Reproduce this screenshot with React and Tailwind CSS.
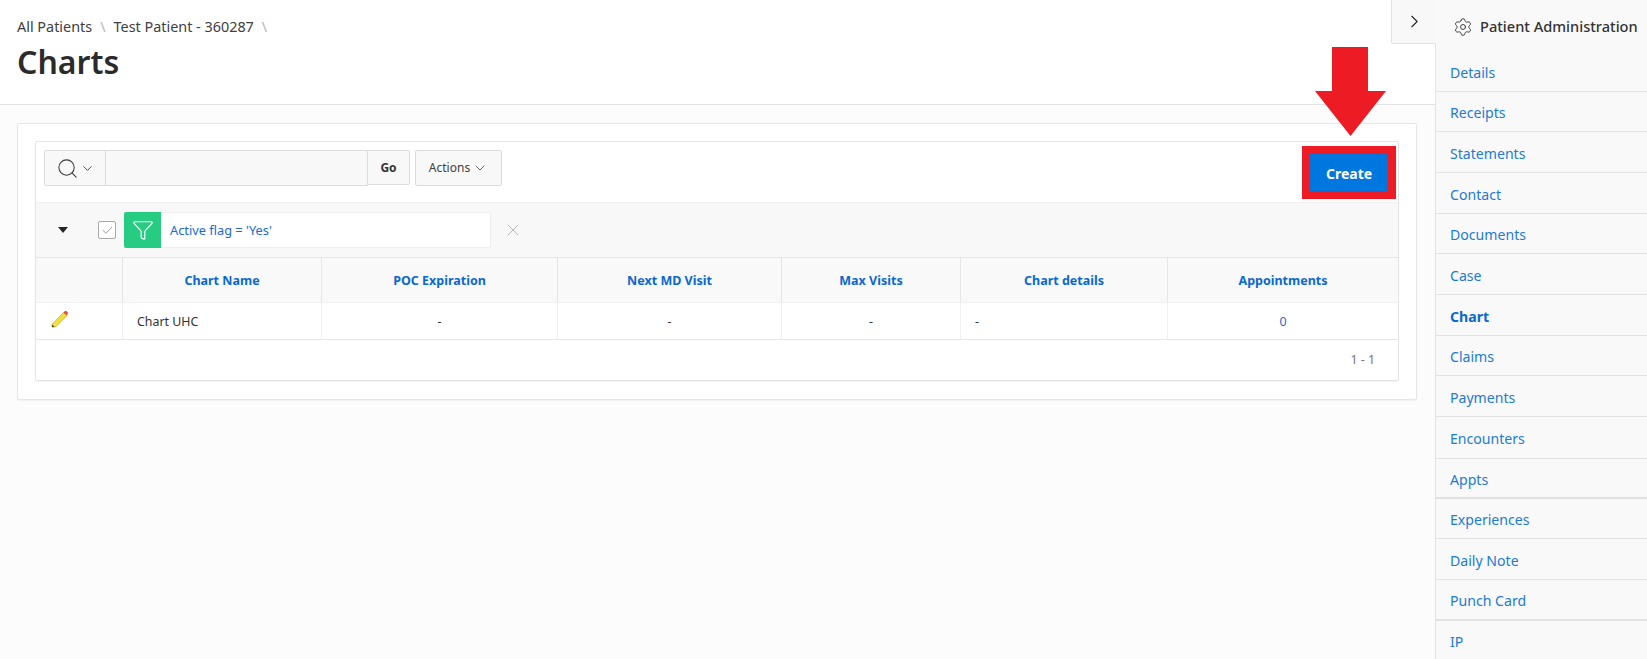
import React from "react";
import { ChevronDown, ChevronRight, Search, Settings, X, Check, Funnel } from "lucide-react";

const navTop = [
  ["Details", 41, 1], ["Receipts", 40, 1], ["Statements", 41, 1], ["Contact", 41, 1], ["Documents", 40, 1], ["Case", 41, 1],
  ["Chart", 41, 1], ["Claims", 40, 1], ["Payments", 41, 1], ["Encounters", 42, 1], ["Appts", 40, 2], ["Experiences", 40, 1], ["Daily Note", 41, 1], ["Punch Card", 41, 2], ["IP", 38, 0],
];
const cols = [
  ["", ""],
  ["Chart Name", "Chart UHC"],
  ["POC Expiration", "-"],
  ["Next MD Visit", "-"],
  ["Max Visits", "-"],
  ["Chart details", "-"],
  ["Appointments", "0"],
];
const grid = "grid grid-cols-[87px_199px_236px_224px_179px_207px_1fr]";

function Pencil() {
  return (
    <svg width="18" height="18" viewBox="0 0 18 18">
      <path d="M1 14.5 L12.5 2.5 L16 5.5 L4.5 17 L1 17 Z" fill="#f2e23c" stroke="#b5a52a" strokeWidth="0.7" />
      <path d="M12.5 2.5 L14 1 Q15.5 0.5 16.6 2 Q17.3 3.2 16 5.5 Z" fill="#ec4b2c" />
      <path d="M1 14.6 L3.6 17 L1 17 Z" fill="#3a3a2a" />
    </svg>
  );
}

export default function App() {
  return (
    <div className="relative flex h-[659px] w-[1647px] overflow-hidden bg-[#fcfcfc] font-['Noto_Sans','Open_Sans',sans-serif] text-[#262626]">
      <main className="w-[1435px] shrink-0">
        <header className="h-[105px] border-b border-[#e2e2e2] bg-white pl-[17px] pt-4">
          <div className="flex h-[22px] items-center text-[14.4px] text-[#404040]">
            <span>All Patients</span>
            <span className="mx-[8px] text-[#b5b5b5]">\</span>
            <span>Test Patient - 360287</span>
            <span className="mx-[8px] text-[#b5b5b5]">\</span>
          </div>
          <h1 className="mt-[2px] text-[32px] font-semibold leading-[44px] text-[#2b2b2b]">Charts</h1>
        </header>

        <section className="ml-[17px] mt-[18px] h-[277px] w-[1400px] rounded-[2px] border border-[#e6e6e6] bg-white pl-[17px] pt-[17px] shadow-[0_1px_2px_rgba(0,0,0,0.05)]">
          <div className="h-[240px] w-[1364px] rounded-[2px] border border-[#e4e4e4] bg-white shadow-[0_1px_1px_rgba(0,0,0,0.04)]">
            <div className="flex h-[60px] items-start pl-2 pt-2">
              <div className="flex h-[36px] w-[324px] rounded-l-[2px] border border-[#dcdcdc] bg-[#f8f8f8]">
                <div className="flex w-[61px] items-center justify-center gap-[1px] border-r border-[#dcdcdc] text-[#3a3a3a]">
                  <Search size={23} strokeWidth={1.1} />
                  <ChevronDown size={15} strokeWidth={1.4} />
                </div>
              </div>
              <div className="flex h-[35px] w-[42px] items-center justify-center rounded-r-[2px] border border-l-0 border-[#dcdcdc] bg-[#f8f8f8] text-xs font-bold text-[#333]">Go</div>
              <div className="ml-[5px] flex h-[36px] w-[87px] items-center justify-center gap-[2px] rounded-[2px] border border-[#dcdcdc] bg-[#f8f8f8] text-xs text-[#404040]">
                Actions <ChevronDown size={16} strokeWidth={1.2} />
              </div>
            </div>

            <div className="flex h-[55px] items-center border-t border-[#f0f0f0] bg-[#f8f8f8]">
              <div className="ml-[22px] h-0 w-0 border-x-[5px] border-t-[6px] border-x-transparent border-t-[#262626]" />
              <div className="ml-[30px] flex h-[18px] w-[18px] items-center justify-center rounded-[2px] border border-[#a8a8a8] bg-white text-[#555]">
                <Check size={13} strokeWidth={1.1} />
              </div>
              <div className="ml-[8px] flex h-[36px] w-[367px] rounded-[2px] border border-[#eeeeee] bg-white">
                <div className="-my-px -ml-px flex w-[37px] items-center justify-center rounded-l-[2px] bg-[#25cc81] text-white">
                  <Funnel size={22} strokeWidth={1.3} />
                </div>
                <div className="flex items-center pl-[9px] pt-[2px] text-[12.8px] text-[#1a6ad4]">Active flag = 'Yes'</div>
              </div>
              <X size={20} strokeWidth={1.2} className="ml-[12px] text-[#b8b8b8]" />
            </div>

            <div className={`${grid} h-[45px] border-t border-[#e6e6e6] bg-[#f9f9f9]`}>
              {cols.map(([h], i) => (
                <div key={i} className={`flex items-center justify-center pt-[2px] text-[12.5px] font-bold text-[#0a68cf] ${i < 6 ? "border-r border-[#e6e6e6]" : ""}`}>{h}</div>
              ))}
            </div>
            <div className={`${grid} h-[38px] border-y border-[#e6e6e6] border-t-[#f0f0f0] bg-white text-[12.4px]`}>
              {cols.map(([, v], i) => (
                <div key={i} className={`flex items-center pt-[2px] ${i === 1 || i === 5 ? "justify-start pl-[14px]" : "justify-center"} ${i < 6 ? "border-r border-[#f0f0f0]" : ""} ${i === 6 ? "text-[#1a6ad4]" : "text-[#333]"}`}>
                  {i === 0 ? <span className="mb-[6px] mr-[39px]"><Pencil /></span> : v}
                </div>
              ))}
            </div>
            <div className="flex h-[40px] items-center justify-end pr-[23px] text-[12.4px] text-[#7a6f8c]">1 - 1</div>
          </div>
        </section>
      </main>

      <aside className="min-w-0 flex-1 border-l border-[#e2e2e2] bg-[#f9f9f9]">
        <div className="flex h-[51px] items-center pl-[17px] pt-[2px] whitespace-nowrap">
          <Settings size={20} strokeWidth={1.1} className="shrink-0 text-[#333]" />
          <span className="ml-[7px] text-[14.6px] font-medium text-[#333]">Patient Administration</span>
        </div>
        <nav>
          {navTop.map(([n, h, b]) => (
            <div
              key={n}
              style={{ height: h, borderBottomWidth: b }}
              className={`flex items-center border-[#e2e2e2] pl-[14px] pt-[3px] text-[14.1px] ${n === "Chart" ? "font-bold text-[#0a68cf]" : "text-[#1c7ad8]"}`}
            >
              {n}
            </div>
          ))}
        </nav>
      </aside>

      <div className="absolute left-[1391px] top-0 flex h-[44px] w-[45px] items-center justify-center rounded-bl-[2px] border-b border-l border-[#e2e2e2] bg-[#f8f8f8] text-[#262626]">
        <ChevronRight size={21} strokeWidth={1.3} />
      </div>

      <svg className="absolute left-[1315px] top-[47px]" width="71" height="90" viewBox="0 0 71 90">
        <path d="M17 0 H53 V44 H71 L35.5 89 L0 44 H17 Z" fill="#ed1c24" />
      </svg>

      <div className="absolute left-[1302px] top-[146px] flex h-[53px] w-[94px] items-center justify-center border-[8px] border-[#ed1c24] bg-[#0076df] pt-[2px] text-sm font-bold text-white">
        Create
      </div>
    </div>
  );
}
